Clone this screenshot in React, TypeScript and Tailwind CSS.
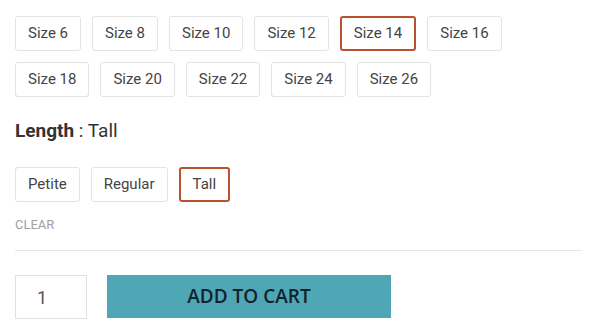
import React, { useState } from 'react';

const sizes = ['Size 6', 'Size 8', 'Size 10', 'Size 12', 'Size 14', 'Size 16', 'Size 18', 'Size 20', 'Size 22', 'Size 24', 'Size 26'];
const lengths = ['Petite', 'Regular', 'Tall'];

const Option: React.FC<{ label: string; active: boolean; onClick: () => void }> = ({ label, active, onClick }) => (
  <button
    onClick={onClick}
    className={`h-[35px] px-[12px] rounded-[3px] text-[15px] text-[#444] bg-white ${
      active ? 'border-2 border-[#b9532e]' : 'border border-[#e3e3e3]'
    }`}
  >
    {label}
  </button>
);

export default function App() {
  const [size, setSize] = useState('Size 14');
  const [length, setLength] = useState('Tall');

  return (
    <div className="w-[605px] h-[334px] bg-white px-[15px] pt-[16px] font-['Roboto',sans-serif] overflow-hidden">
      <div className="flex flex-wrap gap-[11px] w-[500px]">
        {sizes.map(s => (
          <Option key={s} label={s} active={s === size} onClick={() => setSize(s)} />
        ))}
      </div>

      <div className="mt-[22px] text-[19px] text-[#333] leading-[24px]">
        <span className="font-bold">Length</span> : {length}
      </div>

      <div className="flex gap-[11px] mt-[24px]">
        {lengths.map(l => (
          <Option key={l} label={l} active={l === length} onClick={() => setLength(l)} />
        ))}
      </div>

      <button onClick={() => setLength('')} className="block mt-[15px] text-[13px] text-[#a0a0a0] leading-[16px]">
        CLEAR
      </button>

      <div className="mt-[17px] border-t border-[#e5e5e5] w-[567px]" />

      <div className="flex items-start gap-[20px] mt-[24px]">
        <input
          defaultValue="1"
          className="w-[72px] h-[44px] border border-[#e0e0e0] pl-[21px] text-[18px] text-[#555] outline-none"
        />
        <button className="w-[284px] h-[43px] bg-[#4fa6b5] text-[#13222b] font-semibold text-[19px] font-['Open_Sans',sans-serif]">
          ADD TO CART
        </button>
      </div>
    </div>
  );
}
